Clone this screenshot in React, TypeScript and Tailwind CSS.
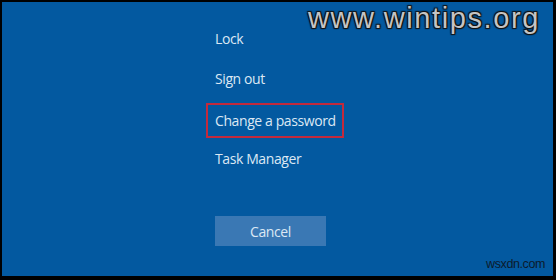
import React from 'react';

const items = ['Lock', 'Sign out', 'Change a password', 'Task Manager'];

export default function App() {
    return (
        <div className="w-[556px] h-[280px] bg-black pt-[2px] pl-[2px] pr-[3px] pb-[4px]">
            <div className="relative w-full h-full bg-[#0359a0] pl-[213px] pt-[17px] text-[14px] tracking-[-0.4px] text-[#dce8f4] font-['Open_Sans',sans-serif] whitespace-nowrap">
                {/* watermark */}
                <div className="absolute left-[306px] top-[-5px] text-[29px] tracking-[1.6px] text-[#c4c4c4] font-['Liberation_Sans',Arial,sans-serif] [text-shadow:1px_1px_1px_#111,-1px_-1px_1px_#111,1px_-1px_1px_#111,-1px_1px_1px_#111]">
                    www.wintips.org
                </div>
                <div className="flex flex-col">
                    {items.map((item) =>
                        item === 'Change a password' ? (
                            <div key={item} className="h-[40px] pt-[4px]">
                                <div className="w-[138px] h-[35px] -ml-[9px] pl-[7px] border-2 border-[#c42a3c] flex items-center">
                                    {item}
                                </div>
                            </div>
                        ) : (
                            <div key={item} className="h-[40px] leading-[40px]">
                                {item}
                            </div>
                        )
                    )}
                </div>
                <div className="mt-[37px] w-[111px] h-[30px] bg-[#3a78b4] flex items-center justify-center">
                    Cancel
                </div>
                <div className="absolute right-[8px] bottom-[2px] text-[12.5px] text-[#0b1b2c] font-['Liberation_Sans',Arial,sans-serif]">
                    wsxdn.com
                </div>
            </div>
        </div>
    );
}
